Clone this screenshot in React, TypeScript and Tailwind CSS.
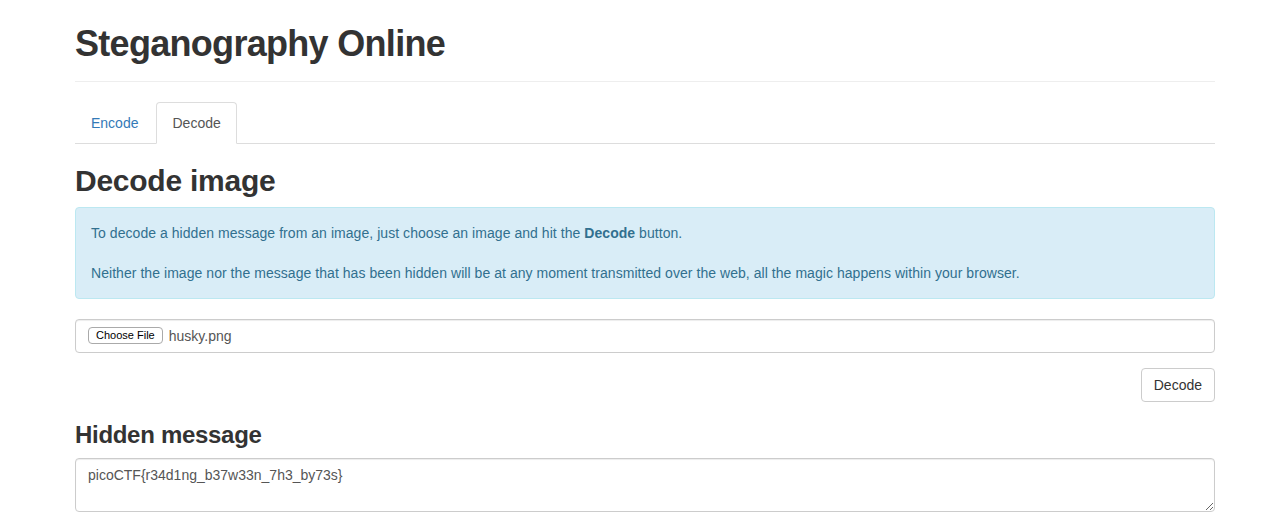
import React from "react";

export default function App() {
  return (
    <div
      className="min-h-[530px] bg-white text-[#333] text-[14px] leading-[20px]"
      style={{ fontFamily: '"Liberation Sans", Arial, Helvetica, sans-serif' }}
    >
      <div className="ml-[75px] w-[1140px]">
        <div className="mt-[20px] pb-[9px] mb-[20px] border-b border-[#eee]">
          <h1 className="pt-[4px] text-[36px] leading-[39.6px] font-bold tracking-[-0.7px] mb-[8px]">
            Steganography Online
          </h1>
        </div>

        <ul className="flex border-b border-[#ddd]">
          <li className="-mb-px mr-[2px]">
            <a className="block px-[15px] py-[10px] border border-transparent rounded-t-[4px] text-[#337ab7]">
              Encode
            </a>
          </li>
          <li className="-mb-px mr-[2px]">
            <a className="block px-[15px] py-[10px] border border-[#ddd] border-b-white rounded-t-[4px] bg-white text-[#555]">
              Decode
            </a>
          </li>
        </ul>

        <h2 className="mt-[20px] mb-[10px] text-[30px] leading-[33px] font-bold tracking-[-0.25px]">
          Decode image
        </h2>

        <div className="p-[15px] border border-[#bce8f1] bg-[#d9edf7] text-[#31708f] rounded-[4px] mb-[20px] tracking-[0.05px]">
          <div>
            To decode a hidden message from an image, just choose an image and hit the{" "}
            <b className="font-bold">Decode</b> button.
          </div>
          <div className="h-[20px]" />
          <div>
            Neither the image nor the message that has been hidden will be at any moment transmitted over the web, all the magic happens within your browser.
          </div>
        </div>

        <div className="mb-[15px]">
          <div className="h-[34px] border border-[#ccc] rounded-[4px] px-[12px] flex items-center shadow-[inset_0_1px_1px_rgba(0,0,0,0.075)]">
            <span className="h-[17px] px-[7px] border border-[#aaa] rounded-[4px] bg-white text-[11px] leading-[15px] text-black flex items-center">
              Choose File
            </span>
            <span className="ml-[6px] text-[#555] text-[14px]">husky.png</span>
          </div>
        </div>

        <div className="flex justify-end">
          <button className="h-[34px] px-[12px] border border-[#ccc] rounded-[4px] bg-white text-[#333] text-[14px]">
            Decode
          </button>
        </div>

        <h3 className="mt-[20px] mb-[10px] text-[24px] leading-[26.4px] font-bold tracking-[-0.3px]">
          Hidden message
        </h3>

        <textarea
          readOnly
          rows={2}
          value="picoCTF{r34d1ng_b37w33n_7h3_by73s}"
          className="block w-full h-[54px] border border-[#ccc] rounded-[4px] px-[12px] py-[6px] text-[#555] text-[14px] leading-[20px] shadow-[inset_0_1px_1px_rgba(0,0,0,0.075)] outline-none resize-y"
          style={{ fontFamily: '"Liberation Sans", Arial, Helvetica, sans-serif' }}
        />
      </div>
    </div>
  );
}
